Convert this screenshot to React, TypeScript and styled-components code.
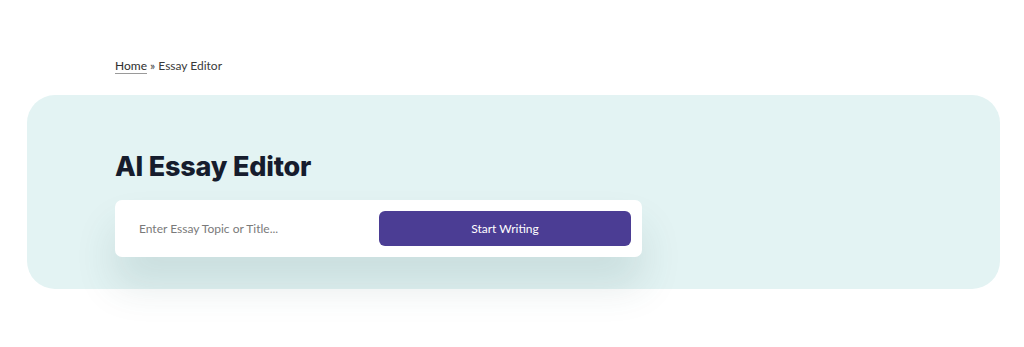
import React from "react";
import styled, { createGlobalStyle } from "styled-components";

const Global = createGlobalStyle`
  html, body { margin: 0; padding: 0; background: #ffffff; }
  body { font-family: "Lato", "Noto Sans", sans-serif; }
`;

const Page = styled.div`
  width: 1024px;
  height: 347px;
  box-sizing: border-box;
  padding: 58px 24px 0 27px;
  overflow: hidden;
`;

const Breadcrumb = styled.nav`
  padding-left: 88px;
  font-family: "Lato", sans-serif;
  font-size: 12px;
  color: #3a3a3a;
  line-height: 15px;
  height: 15px;
`;

const Crumb = styled.a`
  color: #2e2e2e;
  text-decoration: underline;
  text-decoration-color: #9a9a9a;
  text-underline-offset: 3px;
`;

const Hero = styled.section`
  margin-top: 22px;
  background: #e3f3f3;
  border-radius: 28px;
  height: 194px;
  box-sizing: border-box;
  padding: 54px 0 0 88px;
`;

const Title = styled.h1`
  margin: 0;
  font-family: "Inter", sans-serif;
  font-weight: 800;
  font-size: 27px;
  letter-spacing: -0.2px;
  line-height: 36px;
  color: #161c2d;
`;

const Card = styled.div`
  margin-top: 15px;
  width: 527px;
  height: 57px;
  box-sizing: border-box;
  background: #ffffff;
  border-radius: 7px;
  display: flex;
  align-items: center;
  padding: 0 11px 0 22px;
  box-shadow: 0 28px 40px rgba(40, 90, 90, 0.14);
`;

const Input = styled.input`
  flex: 1;
  border: none;
  outline: none;
  background: transparent;
  font-family: "Lato", sans-serif;
  font-size: 12px;
  color: #333;
  &::placeholder { color: #7a7a7a; }
`;

const Button = styled.button`
  width: 252px;
  height: 35px;
  border: none;
  border-radius: 6px;
  background: #4b3d94;
  color: #ffffff;
  font-family: "Lato", sans-serif;
  font-size: 12px;
  cursor: pointer;
`;

export default function App() {
  return (
    <>
      <Global />
      <Page>
        <Breadcrumb>
          <Crumb>Home</Crumb> » Essay Editor
        </Breadcrumb>
        <Hero>
          <Title>AI Essay Editor</Title>
          <Card>
            <Input placeholder="Enter Essay Topic or Title..." />
            <Button>Start Writing</Button>
          </Card>
        </Hero>
      </Page>
    </>
  );
}
